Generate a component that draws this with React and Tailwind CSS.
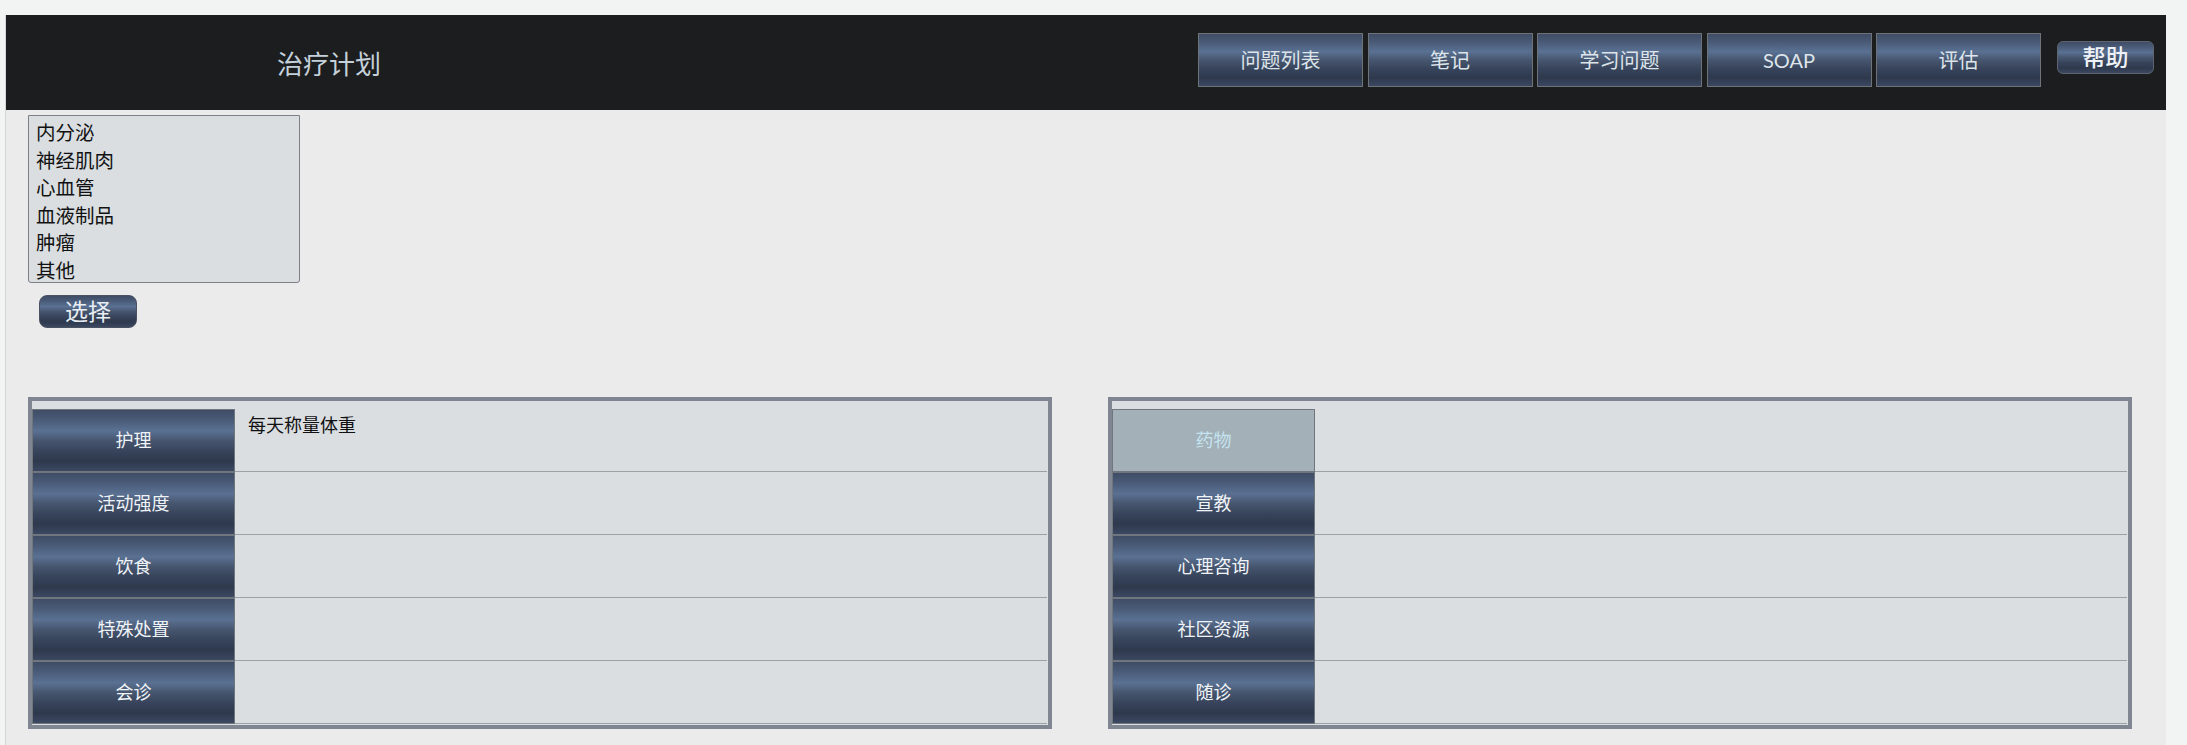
import { useState } from "react";

const navItems = ["问题列表", "笔记", "学习问题", "SOAP", "评估"];
const systems = ["内分泌", "神经肌肉", "心血管", "血液制品", "肿瘤", "其他"];
const leftRows = [
  { label: "护理", value: "每天称量体重" },
  { label: "活动强度", value: "" },
  { label: "饮食", value: "" },
  { label: "特殊处置", value: "" },
  { label: "会诊", value: "" },
];
const rightRows = [
  { label: "药物", value: "", active: true },
  { label: "宣教", value: "" },
  { label: "心理咨询", value: "" },
  { label: "社区资源", value: "" },
  { label: "随诊", value: "" },
];

const glossy =
  "bg-[linear-gradient(to_bottom,#3f4c65_0%,#4b5d7a_18%,#5a7193_34%,#47566f_50%,#36435a_68%,#2e394d_84%,#3b4861_100%)]";

function PlanTable({ rows }) {
  return (
    <div className="w-[1024px] border-4 border-[#7f8691] bg-[#dadee1] pt-[8px] pb-[1px] pr-[1px]">
      {rows.map((r) => (
        <div key={r.label} className="flex h-[63px]">
          <div
            className={
              r.active
                ? "w-[203px] shrink-0 border border-[#6f767e] bg-[#a3b0b7] flex items-center justify-center text-[18px] text-[#c4e3ef]"
                : `w-[203px] shrink-0 border border-[#6f767e] ${glossy} flex items-center justify-center text-[18px] text-[#f0f4f8]`
            }
          >
            {r.label}
          </div>
          <div className="flex-1 border-b border-[#9ca1a8] pl-[13px] pt-[3px] text-[18px] text-[#111] leading-[26px]">
            {r.value}
          </div>
        </div>
      ))}
    </div>
  );
}

export default function App() {
  const [selected, setSelected] = useState(null);

  return (
    <div
      className="min-h-screen w-full bg-[#f2f3f3] pt-[15px] pl-[5px]"
      style={{ fontFamily: '"Lato", "Noto Sans CJK SC", sans-serif' }}
    >
      <div className="w-[2161px] min-h-[730px] bg-[#ebebeb] border-l border-[#d4d6d8]">
        {/* Header */}
        <div className="h-[95px] bg-[#1c1d1f] flex items-start">
          <div className="pl-[271px] pt-[32px] text-[26px] leading-[34px] text-[#c5d1da]">治疗计划</div>
          <div className="ml-auto flex pt-[18px] gap-[4.5px]">
            {navItems.map((n) => (
              <button
                key={n}
                className={`w-[165px] h-[54px] border border-[#6e7378] ${glossy} text-[20px] text-[#dde4ea]`}
              >
                {n}
              </button>
            ))}
          </div>
          <button
            className={`ml-[16px] mt-[26px] mr-[12px] w-[97px] h-[33px] rounded-[6px] border border-[#5d6470] ${glossy} text-[23px] font-medium leading-none text-[#eef2f6]`}
          >
            帮助
          </button>
        </div>

        {/* System list */}
        <div className="ml-[22px] mt-[5px] w-[272px] h-[168px] border border-[#7c8086] rounded-b-[3px] bg-[#dadee1] pl-[7px] pt-[3px]">
          {systems.map((s) => (
            <div
              key={s}
              onClick={() => setSelected(s)}
              className={
                selected === s
                  ? "text-[19.5px] leading-[27.5px] text-white bg-[#3f4c65]"
                  : "text-[19.5px] leading-[27.5px] text-[#111]"
              }
            >
              {s}
            </div>
          ))}
        </div>
        <button
          className={`ml-[33px] mt-[12px] w-[98px] h-[33px] rounded-[8px] border border-[#4a5262] ${glossy} text-[23px] leading-none text-[#e8eef4]`}
        >
          选择
        </button>

        {/* Tables */}
        <div className="ml-[22px] mt-[69px] flex gap-[56px]">
          <PlanTable rows={leftRows} />
          <PlanTable rows={rightRows} />
        </div>
      </div>
    </div>
  );
}
